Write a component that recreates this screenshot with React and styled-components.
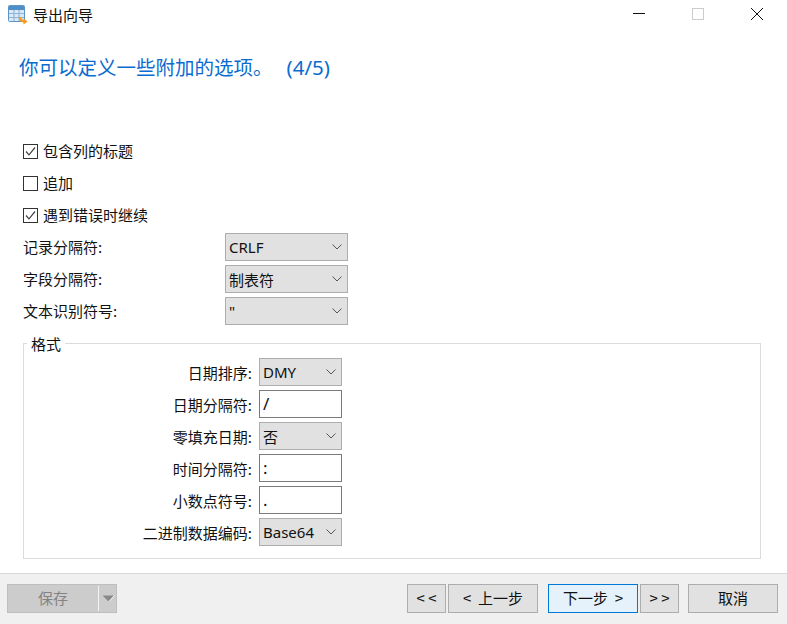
import React from 'react';
import styled, { createGlobalStyle } from 'styled-components';

const GlobalStyle = createGlobalStyle`
  html, body { margin: 0; padding: 0; background: #fff; }
  body { font-family: "Noto Sans CJK SC", "Liberation Sans", sans-serif; color: #111; }
`;

function AppIcon() {
  return (
    <svg width="20" height="20" viewBox="0 0 20 20">
      <rect x="0.5" y="0.5" width="16" height="16" rx="1" fill="#dbe8f4" stroke="#5b94c6" />
      <rect x="1" y="1" width="15" height="4" fill="#4f8ec6" />
      <path d="M1 8.5H16M1 12.5H16M6 5V16M11 5V16" stroke="#8db6d9" strokeWidth="1.2" />
      <path d="M12 12c0 3 2 4.500 5 4.500" fill="none" stroke="#f39a1e" strokeWidth="2.400" />
      <path d="M15.500 13.500l4 3-4 3z" fill="#f39a1e" />
    </svg>
  );
}

function Chevron() {
  return (
    <svg width="10" height="6" viewBox="0 0 10 6">
      <path d="M0.500 0.500L5 5L9.500 0.500" fill="none" stroke="#555" />
    </svg>
  );
}

function Check() {
  return (
    <svg width="13" height="13" viewBox="0 0 13 13">
      <path d="M2 6.500L5 9.800L11 2.500" fill="none" stroke="#444" strokeWidth="1.200" />
    </svg>
  );
}

function SaveArrow() {
  return (
    <svg width="13" height="7" viewBox="0 0 13 7">
      <path d="M0.500 0.500H12L6.500 6.500z" fill="#8a8a8a" />
      <path d="M12.500 0.500L7 6.500" stroke="#f4f4f4" />
    </svg>
  );
}

function CheckRow({ checked, children }) {
  return (
    <CheckLine>
      <CheckBox>{checked && <Check />}</CheckBox>
      <CheckLabel>{children}</CheckLabel>
    </CheckLine>
  );
}

function Select({ value }) {
  return (
    <SelectBox>
      <span>{value}</span>
      <Chevron />
    </SelectBox>
  );
}

const formatRows = [
  { label: '日期排序:', select: 'DMY' },
  { label: '日期分隔符:', input: '/' },
  { label: '零填充日期:', select: '否' },
  { label: '时间分隔符:', input: ':' },
  { label: '小数点符号:', input: '.' },
  { label: '二进制数据编码:', select: 'Base64' },
];

export default function App() {
  return (
    <Window>
      <GlobalStyle />
      <TitleBar>
        <TitleLeft>
          <AppIcon />
          <TitleText>导出向导</TitleText>
        </TitleLeft>
        <WinButtons>
          <WinButton>
            <svg width="12" height="12" viewBox="0 0 12 12"><path d="M0 5.500H12" stroke="#111" /></svg>
          </WinButton>
          <WinButton>
            <svg width="12" height="12" viewBox="0 0 12 12"><rect x="0.500" y="0.500" width="11" height="11" fill="none" stroke="#ccc" /></svg>
          </WinButton>
          <WinButton>
            <svg width="12" height="12" viewBox="0 0 12 12"><path d="M0 0L12 12M12 0L0 12" stroke="#111" /></svg>
          </WinButton>
        </WinButtons>
      </TitleBar>

      <Heading>你可以定义一些附加的选项。<Step>(4/5)</Step></Heading>

      <Body>
        <CheckRow checked>包含列的标题</CheckRow>
        <CheckRow>追加</CheckRow>
        <CheckRow checked>遇到错误时继续</CheckRow>
        <FieldRow>
          <FieldLabel>记录分隔符:</FieldLabel>
          <Select value="CRLF" />
        </FieldRow>
        <FieldRow>
          <FieldLabel>字段分隔符:</FieldLabel>
          <Select value="制表符" />
        </FieldRow>
        <FieldRow>
          <FieldLabel>文本识别符号:</FieldLabel>
          <Select value={'"'} />
        </FieldRow>

        <FormatGroup>
          <Legend>格式</Legend>
          {formatRows.map((row) => (
            <FormatRow key={row.label}>
              <FormatLabel>{row.label}</FormatLabel>
              {row.select ? <Small><Select value={row.select} /></Small> : <TextBox>{row.input}</TextBox>}
            </FormatRow>
          ))}
        </FormatGroup>
      </Body>

      <Footer>
        <SaveButton>
          <SaveLabel>保存</SaveLabel>
          <SaveDivider />
          <SaveArrowSlot><SaveArrow /></SaveArrowSlot>
        </SaveButton>
        <NavGroup>
          <NavButton $w={39}>{'< <'}</NavButton>
          <NavButton $w={90}>{'<  上一步'}</NavButton>
          <NavButton $w={90} $primary $gap={10}>{'下一步  >'}</NavButton>
          <NavButton $w={39}>{'> >'}</NavButton>
          <NavButton $w={90} $gap={9}>取消</NavButton>
        </NavGroup>
      </Footer>
    </Window>
  );
}

const Window = styled.div`
  width: 787px;
  height: 624px;
  display: flex;
  flex-direction: column;
  background: #fff;
  overflow: hidden;
  font-size: 15px;
`;

const TitleBar = styled.div`
  height: 30px;
  display: flex;
  align-items: center;
  justify-content: space-between;
  padding-left: 8px;
`;

const TitleLeft = styled.div`
  display: flex;
  align-items: center;
  gap: 5px;
`;

const TitleText = styled.span`
  font-size: 15px;
  line-height: 20px;
`;

const WinButtons = styled.div`
  display: flex;
  padding: 0 1px 2px 0;
`;

const WinButton = styled.div`
  width: 59px;
  height: 28px;
  display: flex;
  align-items: center;
  justify-content: center;
`;

const Heading = styled.h1`
  margin: 22px 0 0 19px;
  height: 30px;
  font-size: 19.500px;
  line-height: 30px;
  font-weight: 400;
  color: #0a6ccf;
  white-space: pre;
`;

const Step = styled.span`
  margin-left: 14px;
  font-family: "Noto Sans", sans-serif;
  font-size: 20.500px;
`;

const Body = styled.div`
  flex: 1;
  padding: 53px 26px 0 23px;
`;

const CheckLine = styled.div`
  height: 32px;
  display: flex;
  align-items: center;
  gap: 5px;
`;

const CheckBox = styled.div`
  width: 15px;
  height: 15px;
  box-sizing: border-box;
  border: 1px solid #333;
  background: #fff;
  display: flex;
  align-items: center;
  justify-content: center;
`;

const CheckLabel = styled.span`
  padding-bottom: 2px;
`;

const FieldRow = styled.div`
  height: 32px;
  display: flex;
  align-items: center;
`;

const FieldLabel = styled.span`
  width: 202px;
  padding-bottom: 2px;
`;

const SelectBox = styled.div`
  width: 123px;
  height: 28px;
  box-sizing: border-box;
  border: 1px solid #adadad;
  background: #e1e1e1;
  display: flex;
  align-items: center;
  justify-content: space-between;
  padding: 0 5px 0 3px;
  white-space: nowrap;
  font-family: "Noto Sans", "Noto Sans CJK SC", sans-serif;
  font-size: 15px;
`;

const Small = styled.div`
  ${SelectBox} { width: 83px; }
`;

const FormatGroup = styled.div`
  position: relative;
  margin-top: 16px;
  height: 216px;
  box-sizing: border-box;
  border: 1px solid #dcdcdc;
  padding-top: 12px;
`;

const Legend = styled.span`
  position: absolute;
  top: -10px;
  left: 3px;
  padding: 0 4px;
  line-height: 20px;
  background: #fff;
`;

const FormatRow = styled.div`
  height: 32px;
  display: flex;
  align-items: center;
`;

const FormatLabel = styled.span`
  width: 228px;
  text-align: right;
  margin-right: 7px;
`;

const TextBox = styled.div`
  width: 83px;
  height: 28px;
  box-sizing: border-box;
  border: 1px solid #7a7a7a;
  background: #fff;
  padding: 0 3px;
  line-height: 26px;
  font-family: "Noto Sans", sans-serif;
  font-size: 17px;
`;

const Footer = styled.div`
  height: 51px;
  box-sizing: border-box;
  border-top: 1px solid #d8d8d8;
  background: #f0f0f0;
  display: flex;
  align-items: flex-start;
  justify-content: space-between;
  padding: 10px 9px 0 7px;
`;

const SaveButton = styled.div`
  width: 110px;
  height: 29px;
  box-sizing: border-box;
  border: 1px solid #bfbfbf;
  background: #cccccc;
  display: flex;
  align-items: center;
`;

const SaveLabel = styled.span`
  width: 90px;
  padding-bottom: 2px;
  text-align: center;
  color: #838383;
`;

const SaveDivider = styled.div`
  width: 1px;
  height: 25px;
  background: #f4f4f4;
`;

const SaveArrowSlot = styled.div`
  display: flex;
  margin-left: 3px;
`;

const NavGroup = styled.div`
  display: flex;
`;

const NavButton = styled.div`
  width: ${(p) => p.$w}px;
  height: 29px;
  margin-left: ${(p) => p.$gap ?? 2}px;
  padding-bottom: 2px;
  box-sizing: border-box;
  border: 1px solid ${(p) => (p.$primary ? '#0078d7' : '#adadad')};
  background: ${(p) => (p.$primary ? '#e5f1fb' : '#e1e1e1')};
  display: flex;
  align-items: center;
  justify-content: center;
  white-space: pre;
`;
